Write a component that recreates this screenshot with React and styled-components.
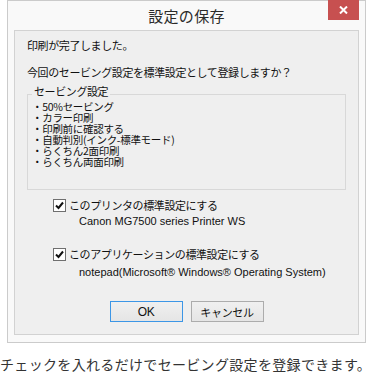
import React from "react";
import styled, { createGlobalStyle } from "styled-components";

const Global = createGlobalStyle`
  html, body { margin: 0; padding: 0; background: #ffffff; }
  body { font-family: "Noto Sans CJK JP", "Noto Sans", sans-serif; }
`;

const Page = styled.div`
  width: 373px;
  height: 374px;
  overflow: hidden;
`;

const Window = styled.div`
  box-sizing: border-box;
  margin-left: 7px;
  width: 359px;
  border: 1px solid #cbcbcb;
  background: #f9f9f9;
  padding: 0 6px 7px 6px;
`;

const TitleBar = styled.div`
  height: 29px;
  display: grid;
  grid-template-columns: 1fr auto 1fr;
  align-items: start;
`;

const Title = styled.div`
  grid-column: 2;
  font-size: 15px;
  line-height: 29px;
  color: #2b2b2b;
  letter-spacing: 0.3px;
`;

const CloseButton = styled.div`
  grid-column: 3;
  justify-self: end;
  margin-top: -1px;
  width: 31px;
  height: 20px;
  background: #c75050;
  display: flex;
  align-items: center;
  justify-content: center;
`;

const Panel = styled.div`
  box-sizing: border-box;
  height: 305px;
  border: 1px solid #d2d2d2;
  background: #efefef;
  padding: 0 0 0 12px;
  color: #111;
  font-size: 11px;
`;

const Line = styled.div`
  line-height: 14px;
  margin-top: ${(p) => p.$top}px;
  margin-left: ${(p) => p.$left || 0}px;
  white-space: nowrap;
  letter-spacing: ${(p) => (p.$latin ? "0" : "-0.4px")};
  font-family: ${(p) =>
    p.$latin
      ? '"Liberation Sans", "Noto Sans CJK JP", sans-serif'
      : '"Noto Sans CJK JP", sans-serif'};
`;

const Group = styled.div`
  position: relative;
  box-sizing: border-box;
  margin-top: 15px;
  width: 319px;
  height: 96px;
  border: 1px solid #d8d8d8;
  padding: 6px 0 0 4px;
`;

const GroupLabel = styled.span`
  position: absolute;
  top: -11px;
  left: 4px;
  padding: 0 2px;
  background: #efefef;
  line-height: 14px;
  letter-spacing: -0.4px;
`;

const Item = styled.div`
  font-size: 10.5px;
  line-height: 11px;
  height: 11px;
  white-space: nowrap;
  letter-spacing: -0.3px;
`;

const CheckRow = styled.label`
  display: flex;
  align-items: center;
  gap: 3px;
  margin-top: ${(p) => p.$top}px;
  margin-left: 26px;
  line-height: 14px;
  letter-spacing: -0.4px;
  white-space: nowrap;
`;

const Box = styled.span`
  box-sizing: border-box;
  width: 13px;
  height: 13px;
  border: 1px solid #6f6f6f;
  background: #ffffff;
  display: flex;
  align-items: center;
  justify-content: center;
  flex: none;
`;

const Buttons = styled.div`
  display: flex;
  justify-content: center;
  gap: 8px;
  margin-top: 22px;
  padding-right: 12px;
`;

const Button = styled.div`
  box-sizing: border-box;
  width: 73px;
  height: 21px;
  border: 1px solid ${(p) => (p.$primary ? "#3c96e6" : "#acacac")};
  background: linear-gradient(#f0f0f0, #e5e5e5);
  display: flex;
  align-items: center;
  justify-content: center;
  letter-spacing: -0.3px;
  color: #111;
  font-family: ${(p) =>
    p.$latin
      ? '"Liberation Sans", sans-serif'
      : '"Noto Sans CJK JP", sans-serif'};
  font-size: ${(p) => (p.$latin ? "12px" : "11px")};
`;

const Caption = styled.div`
  margin-top: 12px;
  font-size: 14px;
  line-height: 18px;
  color: #333333;
  letter-spacing: 0.33px;
  white-space: nowrap;
`;

const Check = () => (
  <svg width="9" height="9" viewBox="0 0 9 9">
    <path d="M1 4.5 L3.5 7 L8 1.5" fill="none" stroke="#111" strokeWidth="2" />
  </svg>
);

const items = [
  "・50%セービング",
  "・カラー印刷",
  "・印刷前に確認する",
  "・自動判別(インク-標準モード)",
  "・らくちん2面印刷",
  "・らくちん両面印刷",
];

export default function App() {
  return (
    <Page>
      <Global />
      <Window>
        <TitleBar>
          <Title>設定の保存</Title>
          <CloseButton>
            <svg width="9" height="8" viewBox="0 0 9 8">
              <path d="M1 0.5 L8 7.5 M8 0.5 L1 7.5" stroke="#fff" strokeWidth="2" />
            </svg>
          </CloseButton>
        </TitleBar>
        <Panel>
          <Line $top={7}>印刷が完了しました。</Line>
          <Line $top={13}>今回のセービング設定を標準設定として登録しますか？</Line>
          <Group>
            <GroupLabel>セービング設定</GroupLabel>
            {items.map((t) => (
              <Item key={t}>{t}</Item>
            ))}
          </Group>
          <CheckRow $top={8}>
            <Box>
              <Check />
            </Box>
            このプリンタの標準設定にする
          </CheckRow>
          <Line $top={2} $left={52} $latin>
            Canon MG7500 series Printer WS
          </Line>
          <CheckRow $top={19}>
            <Box>
              <Check />
            </Box>
            このアプリケーションの標準設定にする
          </CheckRow>
          <Line $top={4} $left={52} $latin>
            notepad(Microsoft® Windows® Operating System)
          </Line>
          <Buttons>
            <Button $primary $latin>OK</Button>
            <Button>キャンセル</Button>
          </Buttons>
        </Panel>
      </Window>
      <Caption>チェックを入れるだけでセービング設定を登録できます。</Caption>
    </Page>
  );
}
